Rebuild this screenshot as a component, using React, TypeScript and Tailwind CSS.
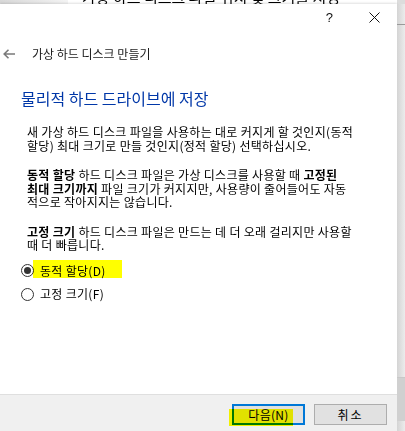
import React from 'react'

const RadioDot = ({ checked }: { checked?: boolean }) => (
  <span className="w-[13px] h-[13px] rounded-full border border-[#333333] bg-white flex items-center justify-center shrink-0">
    {checked && <span className="w-[7px] h-[7px] rounded-full bg-[#333333]" />}
  </span>
)

export default function App() {
  return (
    <div className="w-[405px] h-[431px] overflow-hidden bg-[#e4e4e4] flex flex-col font-['Noto_Sans_CJK_KR',sans-serif] text-black">
      {/* window behind, only its bottom edge shows */}
      <div className="h-[4px] flex shrink-0 overflow-hidden">
        <div className="w-[68px] bg-gradient-to-r from-[#d8d8d8] to-[#f4f4f4]" />
        <div className="flex-1 bg-white overflow-hidden">
          <div className="-mt-[11px] pl-[14px] text-[15px] leading-[15px] whitespace-nowrap">
            가상 하드 디스크 파일 위치 및 크기를 지정
          </div>
        </div>
        <div className="w-[8px] bg-[#dcdcdc]" />
      </div>

      <div className="flex flex-1 min-h-0">
        {/* dialog */}
        <div className="w-[397px] bg-white flex flex-col shadow-[0_-1px_2px_rgba(0,0,0,0.12)]">
          {/* title bar */}
          <div className="h-[26px] flex items-center justify-end pr-[17px] gap-[36px] shrink-0">
            <span className="text-[13px] leading-none font-['Liberation_Sans',sans-serif] text-[#111]">?</span>
            <svg width="11" height="11" viewBox="0 0 11 11">
              <path d="M0.5 0.5 L10.5 10.5 M10.5 0.5 L0.5 10.5" stroke="#111" strokeWidth="1" />
            </svg>
          </div>

          {/* back row */}
          <div className="mt-[14px] h-[20px] flex items-center shrink-0">
            <svg width="12" height="10" viewBox="0 0 12 10" className="ml-[3px]">
              <path d="M5.5 0.8 L1.2 5 L5.5 9.2 M1.2 5 H12" stroke="#7a7a7a" strokeWidth="1.6" fill="none" />
            </svg>
            <span className="ml-[17px] text-[12px] leading-[20px] text-[#1a1a1a]">가상 하드 디스크 만들기</span>
          </div>

          {/* heading */}
          <h1 className="mt-[24px] ml-[21px] text-[16px] leading-[20px] text-[#0037a8] font-normal">
            물리적 하드 드라이브에 저장
          </h1>

          {/* body */}
          <div className="ml-[27px] text-[12px] leading-[13.5px] tracking-[0.3px]">
            <p className="mt-[17px]">
              새 가상 하드 디스크 파일을 사용하는 대로 커지게 할 것인지(동적
              <br />
              할당) 최대 크기로 만들 것인지(정적 할당) 선택하십시오.
            </p>
            <p className="mt-[16px]">
              <b>동적 할당</b> 하드 디스크 파일은 가상 디스크를 사용할 때 <b>고정된</b>
              <br />
              <b>최대 크기까지</b> 파일 크기가 커지지만, 사용량이 줄어들어도 자동
              <br />
              적으로 작아지지는 않습니다.
            </p>
            <p className="mt-[16px]">
              <b>고정 크기</b> 하드 디스크 파일은 만드는 데 더 오래 걸리지만 사용할
              <br />
              때 더 빠릅니다.
            </p>
          </div>

          {/* radios */}
          <div className="relative mt-[9px] ml-[21px] flex flex-col gap-[3.5px] text-[12px]">
            <div className="absolute left-[12px] top-[-1px] w-[89px] h-[18px] bg-[#ffff00] mix-blend-multiply" />
            <label className="h-[20px] flex items-center gap-[6px]">
              <RadioDot checked />
              <span className="tracking-[0.3px]">동적 할당(D)</span>
            </label>
            <label className="h-[20px] flex items-center gap-[6px]">
              <RadioDot />
              <span className="tracking-[0.3px]">고정 크기(F)</span>
            </label>
          </div>

          <div className="flex-1" />

          {/* footer */}
          <div className="relative h-[37px] shrink-0 border-t border-[#dfdfdf] bg-[#f0f0f0] flex items-start justify-end pt-[9px] pr-[10px] gap-[9px] text-[12px]">
            <button className="w-[73px] h-[21px] border-2 border-[#0078d7] bg-[#e1e1e1] flex items-center justify-center leading-none tracking-[0.3px]">
              다음(N)
            </button>
            <button className="w-[73px] h-[21px] border border-[#adadad] bg-[#e1e1e1] flex items-center justify-center leading-none tracking-[2px]">
              취소
            </button>
            <div className="absolute left-[229px] top-[14px] w-[64px] h-[17px] bg-[#ffff00] mix-blend-multiply" />
          </div>
        </div>

        {/* desktop strip to the right */}
        <div className="flex-1 flex flex-col bg-gradient-to-r from-[#d4d4d4] to-[#ececec]">
          <div className="h-[20px]" />
          <div className="h-[1px] bg-[#9a9a9a]" />
          <div className="flex-1" />
          <div className="h-[44px] border-t border-[#c8c8c8] bg-[#d0d0d0]" />
          <div className="h-[10px]" />
        </div>
      </div>
    </div>
  )
}
